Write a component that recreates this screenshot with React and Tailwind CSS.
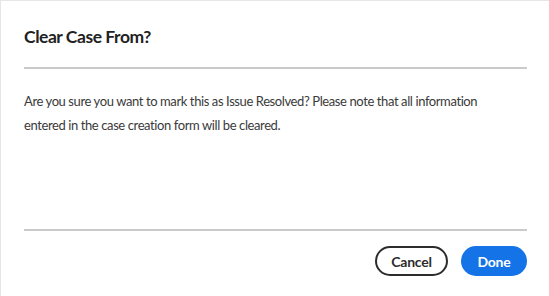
export default function App() {
  return (
    <div className="w-[549px] h-[296px] bg-white border-t border-l border-[#e6e6e6] flex flex-col" style={{ fontFamily: "Lato, 'Noto Sans', sans-serif" }}>
      <div className="px-[23px] pt-[24px]">
        <h2 className="text-[17.5px] font-bold text-[#222] leading-[24px] tracking-[-0.45px]">Clear Case From?</h2>
      </div>
      <div className="ml-[23px] mt-[18px] mr-[22px] h-[2px] bg-[#cacaca]"></div>
      <div className="px-[23px] pt-[20px]">
        <p className="w-[485px] text-[13px] leading-[24px] tracking-[-0.4px] text-[#3a3a3a]">
          Are you sure you want to mark this as Issue Resolved? Please note that all information entered in the case creation form will be cleared.
        </p>
      </div>
      <div className="flex-1"></div>
      <div className="ml-[23px] mr-[22px] h-[2px] bg-[#cacaca]"></div>
      <div className="flex justify-end gap-[13px] pr-[22px] pt-[15px] pb-[20px]">
        <button className="h-[30px] w-[73px] rounded-full border-2 border-[#2c2c2c] text-[14px] font-bold tracking-[-0.2px] text-[#2c2c2c] flex items-center justify-center">Cancel</button>
        <button className="h-[30px] w-[66px] rounded-full bg-[#1473e6] text-[14px] font-bold tracking-[-0.2px] text-white flex items-center justify-center">Done</button>
      </div>
    </div>
  );
}
